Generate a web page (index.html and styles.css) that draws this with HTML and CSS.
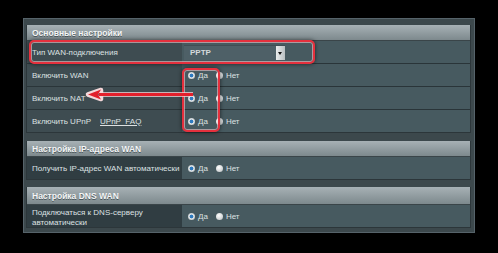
FILE: index.html
```html
<!DOCTYPE html>
<html lang="ru">
<head>
    <meta charset="UTF-8" />
    <title>WAN настройки</title>
    <link rel="stylesheet" href="styles.css">
</head>
<body>
<div class="panel">
    <section class="group">
        <div class="group-head">Основные настройки</div>
        <div class="row">
            <div class="label">Тип WAN-подключения</div>
            <div class="value">
                <div class="select"><span>PPTP</span><i class="select-btn"></i></div>
            </div>
        </div>
        <div class="row">
            <div class="label">Включить WAN</div>
            <div class="value">
                <span class="radio on"></span>Да<span class="radio"></span>Нет
            </div>
        </div>
        <div class="row">
            <div class="label">Включить NAT</div>
            <div class="value">
                <span class="radio on"></span>Да<span class="radio"></span>Нет
            </div>
        </div>
        <div class="row">
            <div class="label">Включить UPnP <a class="faq">UPnP&nbsp; FAQ</a></div>
            <div class="value">
                <span class="radio on"></span>Да<span class="radio"></span>Нет
            </div>
        </div>
    </section>

    <section class="group dim">
        <div class="group-head">Настройка IP-адреса WAN</div>
        <div class="row">
            <div class="label">Получить IP-адрес WAN автоматически</div>
            <div class="value">
                <span class="radio on"></span>Да<span class="radio"></span>Нет
            </div>
        </div>
    </section>

    <section class="group dim">
        <div class="group-head tall">Настройка DNS WAN</div>
        <div class="row">
            <div class="label two">Подключаться к DNS-серверу<br>автоматически</div>
            <div class="value">
                <span class="radio on"></span>Да<span class="radio"></span>Нет
            </div>
        </div>
    </section>

    <div class="mark mark-type"></div>
    <div class="mark mark-radios"></div>
    <svg class="pointer" width="110" height="16" viewBox="0 0 110 16">
        <path d="M108 7.5 H16 V3 L3 7.5 L16 12 V8" fill="none" stroke="#f4d8da" stroke-width="4.5" stroke-linejoin="round"/>
        <path d="M108 7.5 H14" stroke="#e3202c" stroke-width="2.8"/>
        <path d="M3 7.5 L16 2.5 L13 7.5 L16 12.5 Z" fill="#e3202c"/>
    </svg>
</div>
</body>
</html>
```

FILE: styles.css
```css
:root {
    --text: #dde1e2;
    --head-top: #a3adb1;
    --head-bottom: #7a868a;
    --cell: #475a60;
    --cell-dark: #303d42;
    --line: #2a3539;
    --red: #e5303d;
    --font: "Liberation Sans", Arial, sans-serif;
}

* { box-sizing: border-box; }

body {
    margin: 0;
    background: #000;
    font-family: var(--font);
    font-size: 8px;
    color: var(--text);
}

.panel {
    position: relative;
    margin: 18px 0 0 23px;
    width: 452px;
    height: 215px;
    padding: 6px 3px 4px 2px;
    background: #3c484c;
    border: 1px solid #56636a;
    display: flex;
    flex-direction: column;
    gap: 8px;
}
.panel .group + .group + .group { margin-top: -1px; }

.group { border: 1px solid #2c363a; border-top: 0; }

.group-head {
    height: 16px;
    padding-left: 5px;
    display: flex; align-items: center;
    font-weight: 700;
    font-size: 8.5px;
    color: #f4f6f6;
    text-shadow: 0 1px 0 #4d585c;
    background: linear-gradient(#a7b1b5, #7d898d);
    border-bottom: 1px solid #3a4549;
}
.group-head.tall { height: 18px; }

.row {
    display: flex;
    height: 23px;
    border-top: 1px solid var(--line);
}
.group-head + .row { border-top: 0; height: 22px; }

.label {
    width: 155px;
    padding-left: 5px;
    display: flex; align-items: center;
    background: #3e4c51;
}
.dim .label { background: var(--cell-dark); }
.label.two { display: block; padding-top: 3px; line-height: 9.5px; }

.faq {
    margin-left: 9px;
    color: var(--text);
    text-decoration: underline;
}

.value {
    flex: 1;
    display: flex; align-items: center;
    padding-left: 6px;
    background: var(--cell);
}

.radio {
    width: 7px; height: 7px;
    margin-right: 3px;
    border-radius: 50%;
    background: radial-gradient(circle at 40% 35%, #ffffff, #b9bec0);
}
.value .radio:nth-of-type(2) { margin-left: 8px; }
.radio.on {
    background: radial-gradient(circle, #2d7ac0 0 1.6px, #dfe4e6 2.2px, #aeb4b7);
}

.select {
    margin-left: -4px;
    width: 101px; height: 15px;
    display: flex; align-items: center; justify-content: space-between;
    padding-left: 6px;
    background: #4e6067;
    border-top: 1px solid #3f4e54;
    font-weight: 700;
    color: #d4d9db;
}
.select-btn {
    position: relative;
    width: 9px; height: 14px;
    background: linear-gradient(90deg, #e9ecec, #b9bfc1);
}
.select-btn::after {
    content: "";
    position: absolute; left: 2px; top: 6px;
    border: 2.5px solid transparent;
    border-top: 3px solid #111;
    border-bottom: 0;
}

.mark {
    position: absolute;
    border: 2px solid var(--red);
    border-radius: 5px;
    box-shadow: inset 0 0 0 1px rgba(255, 210, 214, 0.55), 0 0 4px rgba(0, 0, 0, 0.6);
}
.mark-type { left: 5px; top: 21px; width: 286px; height: 24px; }
.mark-radios { left: 158px; top: 49px; width: 38px; height: 64px; }

.pointer { position: absolute; left: 61px; top: 68px; }
```
